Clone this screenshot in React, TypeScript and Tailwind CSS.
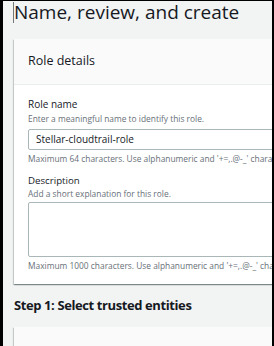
const cardShadow =
  "shadow-[0_1px_1px_0_rgba(0,28,36,0.3),1px_1px_1px_0_rgba(0,28,36,0.15),-1px_1px_1px_0_rgba(0,28,36,0.15)]";

const App = () => {
  return (
    <div className="w-[274px] h-[346px] overflow-hidden bg-[#f2f3f3] border-t border-l-[3px] border-r-[2px] border-black font-['Open_Sans',sans-serif] text-[#16191f]">
      {/* Page title with text caret */}
      <div className="flex items-stretch ml-[10px] h-[22px]">
        <div className="w-px bg-[#777] mt-[1px]" />
        <h1 className="text-[19px] leading-[22px] whitespace-nowrap">Name, review, and create</h1>
      </div>

      {/* Role details card */}
      <div className={`mt-4 ml-[11px] w-[330px] bg-white ${cardShadow}`}>
        <div className="bg-[#fafafa] border-b border-[#eaeded] pl-[14px] pt-[13px] pb-[15px]">
          <h2 className="text-[12.5px] leading-[17px]">Role details</h2>
        </div>
        <div className="pl-[14px] pt-[13px] pb-[13px]">
          <label className="block text-[10px] leading-[13px]">Role name</label>
          <p className="mt-[2px] text-[8.4px] leading-[11px] text-[#687078] whitespace-nowrap">
            Enter a meaningful name to identify this role.
          </p>
          <div className="mt-[5px] h-[21px] border border-[#aab7b8] rounded-[2px] pl-[7px] flex items-center">
            <span className="text-[10px] leading-[13px]">Stellar-cloudtrail-role</span>
          </div>
          <p className="mt-[3px] text-[8.4px] leading-[11px] text-[#687078] whitespace-nowrap">
            Maximum 64 characters. Use alphanumeric and '+=,.@-_' characters.
          </p>

          <label className="block mt-[10px] text-[9.7px] leading-[13px]">Description</label>
          <p className="mt-px text-[8.4px] leading-[11px] text-[#687078] whitespace-nowrap">
            Add a short explanation for this role.
          </p>
          <div className="mt-[3px] h-[55px] border border-[#aab7b8] rounded-[2px]" />
          <p className="mt-[3px] text-[8.4px] leading-[11px] text-[#687078] whitespace-nowrap">
            Maximum 1000 characters. Use alphanumeric and '+=,.@-_' characters.
          </p>
        </div>
      </div>

      {/* Step 1 */}
      <h2 className="mt-[13px] ml-[11px] text-[13px] leading-[17px] font-bold tracking-[-0.4px] whitespace-nowrap">
        Step 1: Select trusted entities
      </h2>
      <div className={`mt-[13px] ml-[11px] w-[330px] h-[40px] bg-[#fafafa] ${cardShadow}`} />
    </div>
  );
};

export default App;
